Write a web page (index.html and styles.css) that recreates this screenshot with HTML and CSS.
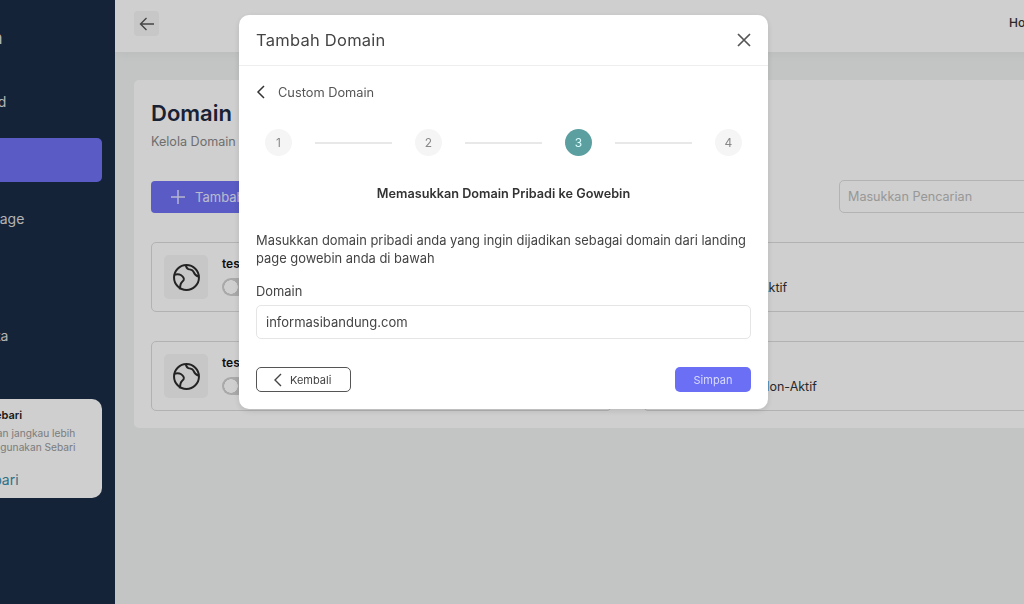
FILE: index.html
```html
<!DOCTYPE html>
<html lang="en">
<head>
  <meta charset="UTF-8">
  <meta name="viewport" content="width=device-width, initial-scale=1.0">
  <title>Domain</title>
  <link rel="stylesheet" href="styles.css">
</head>
<body>
  <div class="app">
    <aside class="sidebar">
      <div class="brand">Gowebin</div>
      <nav class="nav">
        <a class="nav-item">Dashboard</a>
        <a class="nav-item active">Domain</a>
        <a class="nav-item">Landing Page</a>
        <a class="nav-item">Tema</a>
        <a class="nav-item">Kelola Data</a>
      </nav>
      <div class="promo">
        <div class="promo-title">Ayo Coba Sebari</div>
        <p class="promo-text">Jual produk dan jangkau lebih<br>luas lagi menggunakan Sebari</p>
        <div class="promo-logo">Sebari</div>
      </div>
    </aside>

    <main class="main">
      <div class="topbar">
        <button class="back-button">
          <svg width="16" height="14" viewBox="0 0 16 14" fill="none" stroke="#555" stroke-width="1.4"><path d="M15 7H1.500M7.500 1 1.500 7l6 6"/></svg>
        </button>
        <span class="user-name">Home</span>
      </div>

      <section class="panel">
        <h1>Domain</h1>
        <p class="subtitle">Kelola Domain anda di sini</p>
        <div class="toolbar">
          <button class="add-button">
            <svg width="14" height="14" viewBox="0 0 14 14" stroke="#dfe0ff" stroke-width="1.5"><path d="M7 0v14M0 7h14"/></svg>
            Tambah Domain
          </button>
          <input class="search" type="text" placeholder="Masukkan Pencarian">
        </div>
        <div class="domain-grid">
          <div class="domain-card">
            <div class="globe-tile"><svg class="globe" viewBox="0 0 26 26"><circle cx="13" cy="13" r="12"/><path d="M12.300 1c.4 2.200 1 3.400 2.600 3.900 2.300.6 4 .6 4.800 2.400.7 1.800 1 3.900 5.300 5M1 10.300c2.500-.5 5-.6 6.500.3 2 1.300 3.500 2.600 2.800 4.600-.7 1.700-2.700 2.500-3.100 4.800l-.7 4.500"/></svg></div>
            <div>
              <div class="domain-name">test.com</div>
              <div class="status"><span class="toggle"></span>Aktif</div>
            </div>
          </div>
          <div class="domain-card">
            <div class="globe-tile"><svg class="globe" viewBox="0 0 26 26"><circle cx="13" cy="13" r="12"/><path d="M12.300 1c.4 2.200 1 3.400 2.600 3.900 2.300.6 4 .6 4.800 2.400.7 1.800 1 3.900 5.300 5M1 10.300c2.500-.5 5-.6 6.500.3 2 1.300 3.500 2.600 2.800 4.600-.7 1.700-2.700 2.500-3.100 4.800l-.7 4.500"/></svg></div>
            <div>
              <div class="domain-name">test.com</div>
              <div class="status"><span class="toggle"></span>Aktif</div>
            </div>
          </div>
          <div class="domain-card">
            <div class="globe-tile"><svg class="globe" viewBox="0 0 26 26"><circle cx="13" cy="13" r="12"/><path d="M12.300 1c.4 2.200 1 3.400 2.600 3.900 2.300.6 4 .6 4.800 2.400.7 1.800 1 3.900 5.300 5M1 10.300c2.500-.5 5-.6 6.500.3 2 1.300 3.500 2.600 2.800 4.600-.7 1.700-2.700 2.500-3.100 4.800l-.7 4.500"/></svg></div>
            <div>
              <div class="domain-name">test.com</div>
              <div class="status"><span class="toggle"></span>Non-Aktif</div>
            </div>
          </div>
          <div class="domain-card">
            <div class="globe-tile"><svg class="globe" viewBox="0 0 26 26"><circle cx="13" cy="13" r="12"/><path d="M12.300 1c.4 2.200 1 3.400 2.600 3.900 2.300.6 4 .6 4.800 2.400.7 1.800 1 3.900 5.300 5M1 10.300c2.500-.5 5-.6 6.500.3 2 1.300 3.500 2.600 2.800 4.600-.7 1.700-2.700 2.500-3.100 4.800l-.7 4.500"/></svg></div>
            <div>
              <div class="domain-name">test.com</div>
              <div class="status"><span class="toggle"></span>Non-Aktif</div>
            </div>
          </div>
        </div>
      </section>
    </main>
  </div>

  <div class="overlay">
    <div class="modal">
      <div class="modal-header">
        <h2>Tambah Domain</h2>
        <svg width="14" height="14" viewBox="0 0 14 14" stroke="#555" stroke-width="1.7"><path d="M1 1l12 12M13 1 1 13"/></svg>
      </div>
      <div class="modal-body">
        <div class="crumb">
          <svg width="9" height="14" viewBox="0 0 9 14" fill="none" stroke="#333" stroke-width="1.5"><path d="M8 1 2 7l6 6"/></svg>
          <span>Custom Domain</span>
        </div>
        <div class="stepper">
          <span class="step">1</span><span class="step-line"></span>
          <span class="step">2</span><span class="step-line"></span>
          <span class="step current">3</span><span class="step-line"></span>
          <span class="step">4</span>
        </div>
        <h3>Memasukkan Domain Pribadi ke Gowebin</h3>
        <p class="description">Masukkan domain pribadi anda yang ingin dijadikan sebagai domain dari landing page gowebin anda di bawah</p>
        <label class="field-label" for="domain">Domain</label>
        <input id="domain" class="field" type="text" value="informasibandung.com">
        <div class="modal-actions">
          <button class="btn-back">
            <svg width="9" height="14" viewBox="0 0 9 14" fill="none" stroke="#444" stroke-width="1.4"><path d="M8 1 2 7l6 6"/></svg>
            Kembali
          </button>
          <button class="btn-save">Simpan</button>
        </div>
      </div>
    </div>
  </div>
</body>
</html>
```

FILE: styles.css
```css
* {
  box-sizing: border-box;
}
body {
  font-family: Inter, "Liberation Sans", sans-serif;
  margin: 0;
  padding: 0;
  width: 1024px;
  height: 604px;
  overflow: hidden;
  background-color: #f0f2f2;
  color: #333;
}
h1, h2, h3, p {
  margin: 0;
}
button {
  font-family: inherit;
  cursor: pointer;
}
.app {
  display: flex;
  width: 1140px;
  height: 604px;
}

/* sidebar */
.sidebar {
  flex: 0 0 115px;
  background-color: #1b2c47;
  overflow: hidden;
  white-space: nowrap;
  padding-top: 28px;
}
.brand {
  margin-left: -68px;
  font-size: 17px;
  line-height: 20px;
  color: #ddd;
  height: 51px;
}
.nav {
  display: flex;
  flex-direction: column;
  gap: 14.6px;
  margin-left: -90px;
  width: 192px;
}
.nav-item {
  display: flex;
  align-items: center;
  height: 44px;
  padding-left: 24px;
  font-size: 14px;
  color: #ddd;
  border-radius: 5px;
}
.nav-item.active {
  background-color: #6f71f2;
  color: white;
}
.promo {
  margin: 42px 0 0 -90px;
  width: 192px;
  height: 99px;
  padding: 8px 0 0 24px;
  background-color: white;
  border-radius: 10px;
}
.promo-title {
  font-size: 11px;
  line-height: 16px;
  font-weight: 600;
  color: #222;
}
.promo-text {
  margin: 3px 0 0 -3px;
  font-size: 10.2px;
  line-height: 14px;
  color: #999;
}
.promo-logo {
  margin: 17px 0 0 42px;
  font-size: 14px;
  line-height: 17px;
  color: #3d8ba6;
}

/* main area */
.main {
  flex: 1;
  min-width: 0;
}
.topbar {
  display: flex;
  justify-content: space-between;
  align-items: center;
  height: 52px;
  padding: 0 97px 0 19px;
  background-color: white;
  box-shadow: 0 2px 10px rgba(0, 0, 0, 0.04);
}
.back-button {
  display: flex;
  align-items: center;
  justify-content: center;
  width: 25px;
  height: 25px;
  padding: 0;
  border: none;
  border-radius: 4px;
  background-color: #f5f5f5;
  margin-top: -5px;
}
.user-name {
  font-size: 12px;
  font-weight: 500;
  color: #333;
  margin-top: -7px;
}
.panel {
  margin: 28px 19px 0;
  padding: 15px 17px 17px;
  background-color: white;
  border-radius: 5px;
}
.panel h1 {
  font-size: 22px;
  line-height: 36px;
  font-weight: 600;
  color: #1f2a40;
}
.subtitle {
  margin-top: 2px;
  font-size: 12.6px;
  line-height: 18px;
  color: #888;
}
.toolbar {
  display: flex;
  justify-content: space-between;
  margin-top: 30px;
}
.add-button {
  display: flex;
  align-items: center;
  gap: 10px;
  height: 32px;
  padding: 0 20px;
  border: none;
  border-radius: 4px;
  background-color: #6f71f2;
  color: #e6e6ff;
  font-size: 13px;
}
.search {
  width: 265px;
  height: 33px;
  margin-top: -1px;
  padding: 0 8px;
  border: 1px solid #ddd;
  border-radius: 5px;
  font-family: inherit;
  font-size: 12.6px;
  background: transparent;
}
.search::placeholder {
  color: #bbb;
}
.domain-grid {
  display: grid;
  grid-template-columns: 461px 461px;
  gap: 29px 31px;
  margin-top: 29px;
}
.domain-card {
  display: flex;
  gap: 14px;
  height: 70px;
  padding: 12px;
  border: 1px solid #dcdcdc;
  border-radius: 5px;
}
.globe-tile {
  display: flex;
  align-items: center;
  justify-content: center;
  width: 44px;
  height: 44px;
  border-radius: 5px;
  background-color: #f5f5f5;
}
.globe {
  width: 27px;
  height: 27px;
  fill: none;
  stroke: #2c2c2c;
  stroke-width: 1.9;
}
.domain-name {
  font-size: 12px;
  line-height: 18px;
  font-weight: 600;
  color: #111;
}
.status {
  display: flex;
  align-items: center;
  gap: 11px;
  margin-top: 5px;
  font-size: 12.5px;
  color: #333;
}
.toggle {
  width: 35px;
  height: 18px;
  padding: 2px;
  border-radius: 9px;
  background: radial-gradient(circle at 9px 9px, white 6.5px, #d0d0d0 7px);
}

/* dialog */
.overlay {
  position: fixed;
  inset: 0;
  background-color: rgba(0, 0, 0, 0.19);
}
.modal {
  position: absolute;
  left: 239px;
  top: 15px;
  width: 529px;
  height: 394px;
  background: white;
  border-radius: 10px;
  box-shadow: 0 2px 6px rgba(0, 0, 0, 0.12);
}
.modal-header {
  display: flex;
  justify-content: space-between;
  align-items: center;
  height: 51px;
  padding: 0 17px;
  border-bottom: 1px solid #eee;
}
.modal-header h2 {
  font-size: 16.5px;
  font-weight: 400;
  letter-spacing: 0.25px;
  color: #444;
}
.modal-body {
  padding: 0 17px;
}
.crumb {
  display: flex;
  align-items: center;
  gap: 13px;
  height: 52px;
  font-size: 12.8px;
  color: #555;
}
.stepper {
  display: flex;
  align-items: center;
  margin: 11px 9px 0 9px;
}
.step {
  display: flex;
  align-items: center;
  justify-content: center;
  flex: 0 0 27px;
  height: 27px;
  border-radius: 50%;
  background-color: #f5f5f5;
  color: #888;
  font-size: 12px;
}
.step.current {
  background-color: #5b9fa1;
  color: #dff;
}
.step-line {
  flex: 1;
  height: 2px;
  margin: 0 23px;
  background-color: #e8e8e8;
}
.modal-body h3 {
  margin-top: 29px;
  text-align: center;
  font-size: 12.7px;
  line-height: 18px;
  font-weight: 600;
  color: #333;
}
.description {
  margin-top: 29px;
  font-size: 12.9px;
  line-height: 18px;
  color: #444;
}
.field-label {
  display: block;
  margin-top: 15px;
  font-size: 12.9px;
  line-height: 18px;
  color: #444;
}
.field {
  display: block;
  width: 495px;
  height: 34px;
  margin-top: 4px;
  padding: 0 9px;
  border: 1px solid #e5e5e5;
  border-radius: 5px;
  font-family: inherit;
  font-size: 13px;
  color: #444;
}
.modal-actions {
  display: flex;
  justify-content: space-between;
  width: 495px;
  margin-top: 28px;
}
.btn-back {
  display: flex;
  align-items: center;
  gap: 8px;
  width: 95px;
  height: 25px;
  padding: 0 0 0 16px;
  background: white;
  border: 1px solid #555;
  border-radius: 5px;
  font-size: 11px;
  color: #444;
}
.btn-save {
  width: 76px;
  height: 25px;
  border: none;
  border-radius: 5px;
  background-color: #6a6ff5;
  color: #d8daff;
  font-size: 11px;
}
```
